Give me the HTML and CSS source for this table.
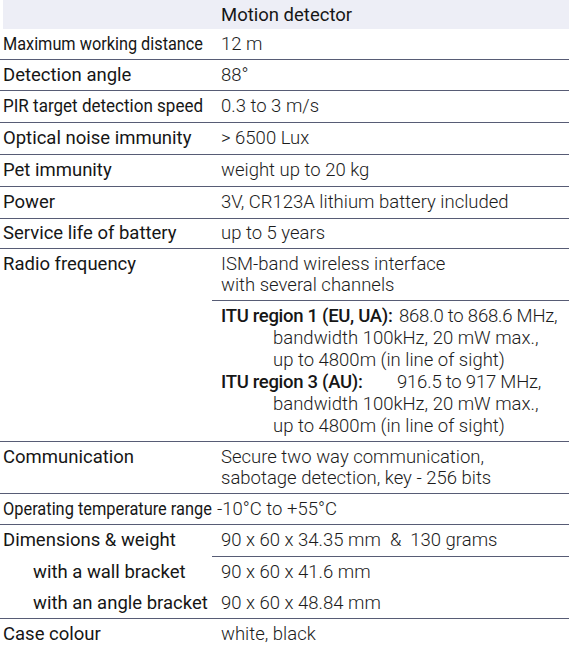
FILE: index.html
```html
<!DOCTYPE html>
<html>
<head>
<meta charset="utf-8">
<link rel="stylesheet" href="styles.css">
</head>
<body>
<table class="spec">
  <thead>
    <tr class="head"><th class="lab"></th><th class="val">Motion detector</th></tr>
  </thead>
  <tbody>
    <tr class="r30"><td class="lab"><span class="squeeze s88">Maximum working distance</span></td><td class="val">12 m</td></tr>
    <tr class="r30"><td class="lab">Detection angle</td><td class="val">88°</td></tr>
    <tr><td class="lab"><span class="squeeze s92">PIR target detection speed</span></td><td class="val">0.3 to 3 m/s</td></tr>
    <tr><td class="lab">Optical noise immunity</td><td class="val">&gt; 6500 Lux</td></tr>
    <tr><td class="lab">Pet immunity</td><td class="val">weight up to 20 kg</td></tr>
    <tr><td class="lab">Power</td><td class="val">3V, CR123A lithium battery included</td></tr>
    <tr class="r29"><td class="lab">Service life of battery</td><td class="val">up to 5 years</td></tr>
    <tr class="split multi"><td class="lab" rowspan="2">Radio frequency</td><td class="val">ISM-band wireless interface<br>with several channels</td></tr>
    <tr>
      <td class="val itu">
        <div class="itu-line"><span class="itu-name">ITU region 1 (EU, UA):</span><span class="itu-freq">868.0 to 868.6 MHz,</span></div>
        <div class="itu-cont">bandwidth 100kHz, 20 mW max.,</div>
        <div class="itu-cont">up to 4800m (in line of sight)</div>
        <div class="itu-line"><span class="itu-name">ITU region 3 (AU):</span><span class="itu-freq alt">916.5 to 917 MHz,</span></div>
        <div class="itu-cont">bandwidth 100kHz, 20 mW max.,</div>
        <div class="itu-cont">up to 4800m (in line of sight)</div>
      </td>
    </tr>
    <tr class="multi"><td class="lab">Communication</td><td class="val">Secure two way communication,<br>sabotage detection, key - 256 bits</td></tr>
    <tr class="r30"><td class="lab"><span class="squeeze s89">Operating temperature range</span></td><td class="val tight">-10°C to +55°C</td></tr>
    <tr class="split dims"><td class="lab">Dimensions &amp; weight</td><td class="val">90 x 60 x 34.35 mm &nbsp;&amp;&nbsp; 130 grams</td></tr>
    <tr class="noline"><td class="lab sub">with a wall bracket</td><td class="val">90 x 60 x 41.6 mm</td></tr>
    <tr class="r30"><td class="lab sub">with an angle bracket</td><td class="val">90 x 60 x 48.84 mm</td></tr>
    <tr><td class="lab">Case colour</td><td class="val">white, black</td></tr>
  </tbody>
</table>
</body>
</html>
```

FILE: styles.css
```css
html, body {
  margin: 0;
  padding: 0;
  background: #ffffff;
}
body {
  font-family: Roboto, "Noto Sans", sans-serif;
  color: #161616;
  font-size: 18.5px;
}
.spec {
  width: 569px;
  border-collapse: collapse;
  table-layout: fixed;
}
.spec td, .spec th {
  padding: 5px 0 5px 0;
  line-height: 21px;
  vertical-align: top;
  text-align: left;
  border-bottom: 1px solid #575c75;
}
.spec tr.r30 td {
  padding-top: 5px;
  padding-bottom: 4px;
}
.spec tr.r29 td {
  padding-top: 4px;
  padding-bottom: 4px;
}
.spec tr.multi td {
  padding-top: 5px;
  padding-bottom: 4px;
}
.head th {
  border-bottom: none;
  background: #edeef6;
  font-weight: 400;
  padding-top: 5px;
  padding-bottom: 3px;
}
.head th.lab {
  background: linear-gradient(to right, #ffffff 3px, #edeef6 3px);
}
.lab {
  width: 209px;
  padding-left: 3px !important;
  font-weight: 400;
  white-space: nowrap;
  overflow: visible;
}
.val {
  padding-left: 9px !important;
  font-weight: 300;
  color: #1c1c1c;
}
.head th.val {
  font-weight: 400;
  color: #161616;
}
.squeeze {
  display: inline-block;
  transform-origin: left center;
}
.s88 {
  transform: scaleX(0.88);
}
.s89 {
  transform: scaleX(0.885);
}
.s92 {
  transform: scaleX(0.92);
}
.tight {
  padding-left: 5px !important;
}
.sub {
  padding-left: 33px !important;
}
.dims td.lab {
  border-bottom: none;
}
tr.split + tr td.val,
tr.noline td {
  border-bottom: none;
}
tr.split + tr td.val.itu {
  border-bottom: 1px solid #575c75;
}
.spec td.itu {
  padding-top: 4px;
  padding-bottom: 4px;
  line-height: 22px;
}
.itu-line {
  display: flex;
}
.itu-name {
  font-weight: 500;
  width: 178px;
  flex: none;
  color: #161616;
  letter-spacing: -0.3px;
}
.itu-freq {
  letter-spacing: -0.2px;
}
.itu-freq.alt {
  margin-left: -2px;
}
.itu-cont {
  padding-left: 52px;
}
```
